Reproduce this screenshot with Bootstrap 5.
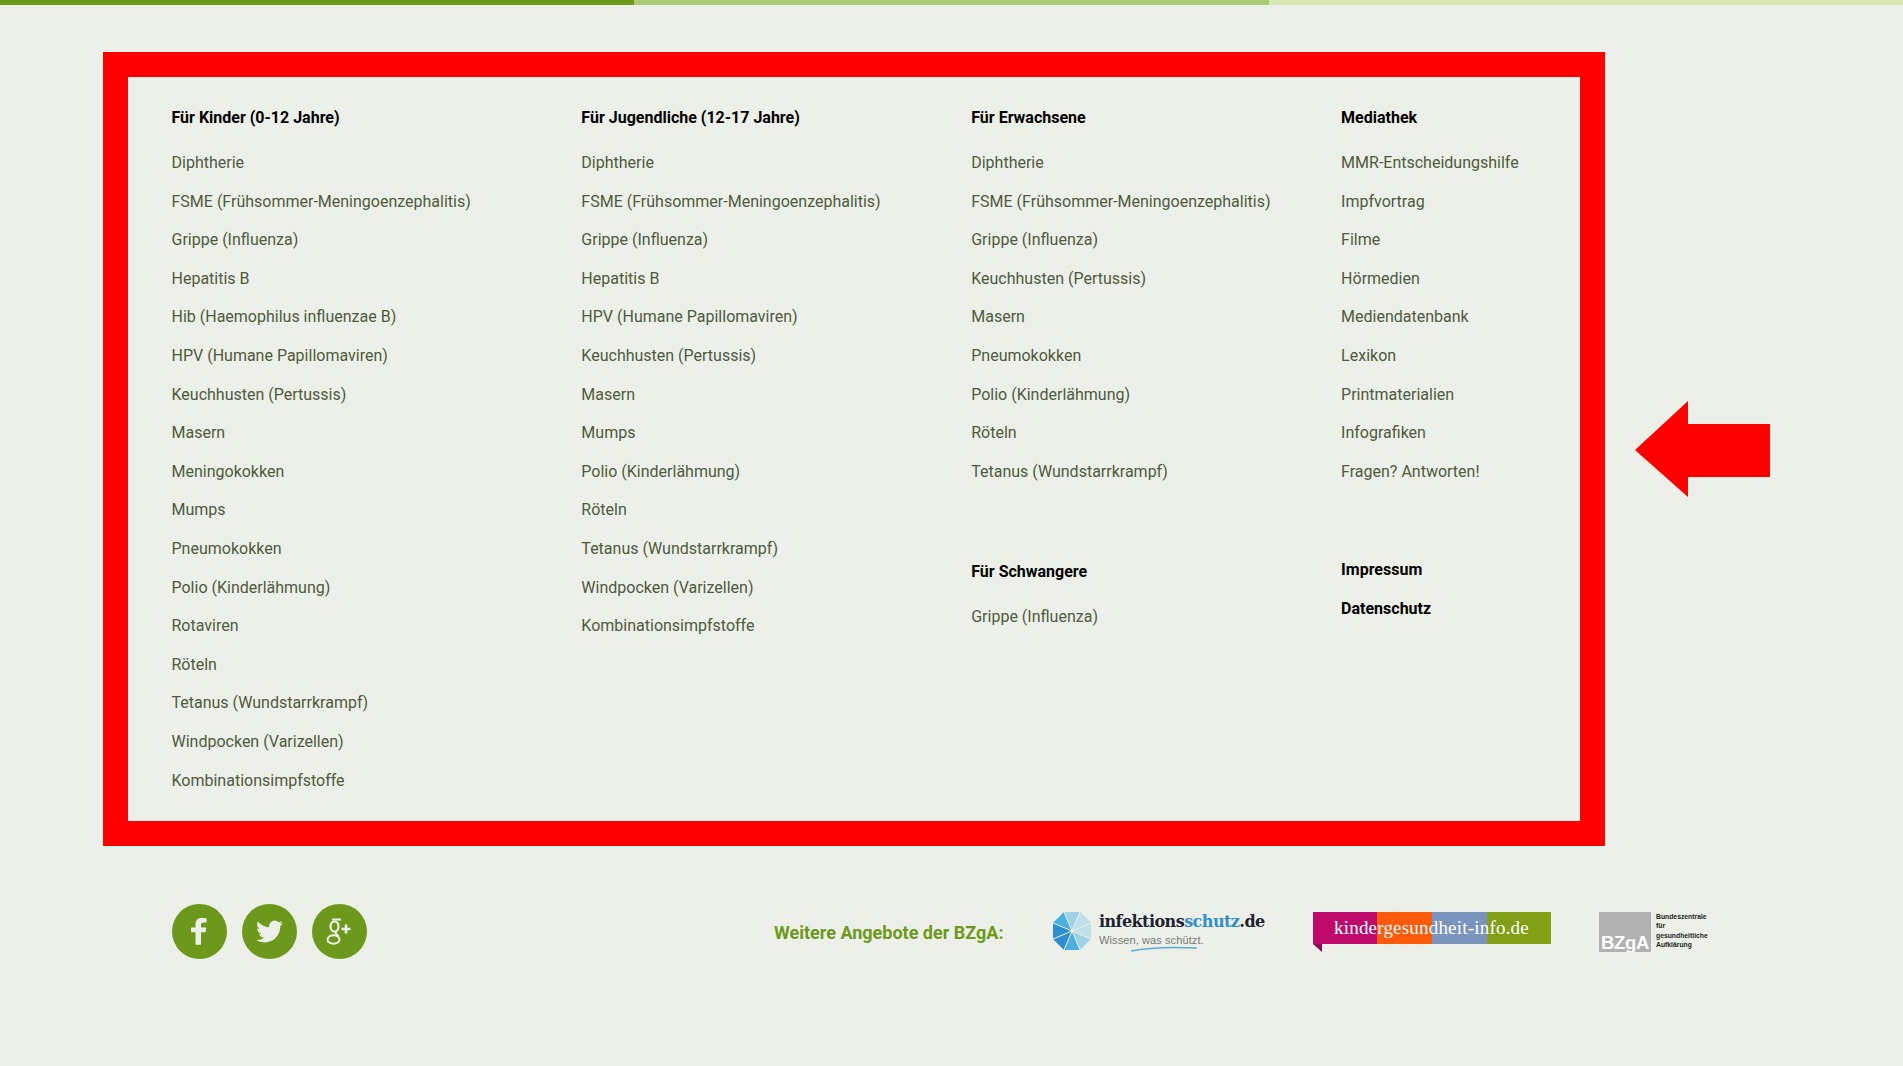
<!DOCTYPE html>
<html lang="de">
<head>
<meta charset="utf-8">
<title>Impfen</title>
<link href="https://cdn.jsdelivr.net/npm/bootstrap@5.3.0/dist/css/bootstrap.min.css" rel="stylesheet">
<style>
body{background:#edf0e8;font-family:Roboto,"Liberation Sans",sans-serif;font-size:16px;color:#4e5a40;height:1066px;overflow:hidden}
.topbar{height:5px}
.seg1{background:#6c991c}.seg2{background:#abcc75}.seg3{background:#d8e8b5}
.stage{padding:47px 0 0 103px;gap:30px}
.redbox{width:1502px;height:794px;border:25px solid #f00;padding:22px 0 0 43.5px}
.c1{width:410px}.c2{width:390px}.c3{width:370px}.c4{width:239px}
.headline{font-weight:700;color:#000;line-height:38.5px;margin:0 0 6.5px;font-size:16px}
.linklist{list-style:none;padding:0;margin:0}
.linklist li{line-height:38.6px;height:38.6px}
.linklist a{color:#4e5a40;text-decoration:none}
.gapblock{margin-top:61.5px}
.gapblock-low{margin-top:59.7px}
.plainhead{margin:0;line-height:38.8px;font-weight:700;font-size:16px}
.plainhead a{color:#000;text-decoration:none}
.arrowpic{width:135px;height:96px;margin-top:349px}
.foot{padding:58px 0 0 171.5px}
.social{gap:15px;width:602.5px}
.rund{width:55px;height:55px;border-radius:50%;background:#6c991c}
.more{font-weight:700;font-size:18px;color:#6c991c;width:279px;line-height:57px}
.ifs{width:260px;height:55px;gap:8px;padding-top:6px}
.ifs-mark{width:38px;height:38px;flex:none;margin-top:2px}
.ifs-name{font-family:"DejaVu Serif","Liberation Serif",serif;font-weight:700;font-size:16px;line-height:20px;color:#1a2233;letter-spacing:-.55px;white-space:nowrap;margin-top:2px}
.ifs-name span{color:#2f8ed0}
.ifs-claim{font-family:"Liberation Sans",sans-serif;font-size:11px;line-height:14px;color:#777;letter-spacing:.1px;margin-top:1px;white-space:nowrap}
.swoosh{display:block;width:66px;height:6px;margin-left:32px;margin-top:-1px}
.kgi{width:238px;height:40px;margin-top:8px;margin-right:48px}
.kgi-band{height:32px;position:relative}
.kgi-band i{display:block;height:100%}
.k1{width:64px;background:#bf0a6b}.k2{width:55px;background:#ff5a0a}.k3{width:55px;background:#7a94bd}.k4{width:64px;background:#82a016}
.kgi-text{position:absolute;left:21px;top:0;line-height:31px;color:#fff;font-family:"Liberation Serif",serif;font-size:19px;letter-spacing:.2px;white-space:nowrap}
.kgi-fold{width:0;height:0;border-top:8px solid #8e0a52;border-left:9px solid transparent}
.bz{margin-top:8px;gap:5px}
.bz-square{width:52px;height:40px;background:#b1b1b1;color:#fff;font-family:"Liberation Sans",sans-serif;font-weight:700;font-size:18.5px;line-height:19px;padding:21px 0 0 2px;letter-spacing:-.3px;overflow:hidden}
.bz-text{font-family:"Liberation Sans",sans-serif;font-size:6.8px;font-weight:700;line-height:9.3px;color:#222;white-space:nowrap}
</style>
</head>
<body>
<div class="topbar d-flex">
  <div class="seg1 flex-fill"></div><div class="seg2 flex-fill"></div><div class="seg3 flex-fill"></div>
</div>
<div class="stage d-flex">
  <div class="redbox d-flex">
    <div class="c1">
      <p class="headline">Für Kinder (0-12 Jahre)</p>
      <ul class="linklist">
        <li><a href="#">Diphtherie</a></li>
        <li><a href="#">FSME (Frühsommer-Meningoenzephalitis)</a></li>
        <li><a href="#">Grippe (Influenza)</a></li>
        <li><a href="#">Hepatitis B</a></li>
        <li><a href="#">Hib (Haemophilus influenzae B)</a></li>
        <li><a href="#">HPV (Humane Papillomaviren)</a></li>
        <li><a href="#">Keuchhusten (Pertussis)</a></li>
        <li><a href="#">Masern</a></li>
        <li><a href="#">Meningokokken</a></li>
        <li><a href="#">Mumps</a></li>
        <li><a href="#">Pneumokokken</a></li>
        <li><a href="#">Polio (Kinderlähmung)</a></li>
        <li><a href="#">Rotaviren</a></li>
        <li><a href="#">Röteln</a></li>
        <li><a href="#">Tetanus (Wundstarrkrampf)</a></li>
        <li><a href="#">Windpocken (Varizellen)</a></li>
        <li><a href="#">Kombinationsimpfstoffe</a></li>
      </ul>
    </div>
    <div class="c2">
      <p class="headline">Für Jugendliche (12-17 Jahre)</p>
      <ul class="linklist">
        <li><a href="#">Diphtherie</a></li>
        <li><a href="#">FSME (Frühsommer-Meningoenzephalitis)</a></li>
        <li><a href="#">Grippe (Influenza)</a></li>
        <li><a href="#">Hepatitis B</a></li>
        <li><a href="#">HPV (Humane Papillomaviren)</a></li>
        <li><a href="#">Keuchhusten (Pertussis)</a></li>
        <li><a href="#">Masern</a></li>
        <li><a href="#">Mumps</a></li>
        <li><a href="#">Polio (Kinderlähmung)</a></li>
        <li><a href="#">Röteln</a></li>
        <li><a href="#">Tetanus (Wundstarrkrampf)</a></li>
        <li><a href="#">Windpocken (Varizellen)</a></li>
        <li><a href="#">Kombinationsimpfstoffe</a></li>
      </ul>
    </div>
    <div class="c3">
      <p class="headline">Für Erwachsene</p>
      <ul class="linklist">
        <li><a href="#">Diphtherie</a></li>
        <li><a href="#">FSME (Frühsommer-Meningoenzephalitis)</a></li>
        <li><a href="#">Grippe (Influenza)</a></li>
        <li><a href="#">Keuchhusten (Pertussis)</a></li>
        <li><a href="#">Masern</a></li>
        <li><a href="#">Pneumokokken</a></li>
        <li><a href="#">Polio (Kinderlähmung)</a></li>
        <li><a href="#">Röteln</a></li>
        <li><a href="#">Tetanus (Wundstarrkrampf)</a></li>
      </ul>
      <div class="gapblock">
        <p class="headline">Für Schwangere</p>
        <ul class="linklist">
          <li><a href="#">Grippe (Influenza)</a></li>
        </ul>
      </div>
    </div>
    <div class="c4">
      <p class="headline">Mediathek</p>
      <ul class="linklist">
        <li><a href="#">MMR-Entscheidungshilfe</a></li>
        <li><a href="#">Impfvortrag</a></li>
        <li><a href="#">Filme</a></li>
        <li><a href="#">Hörmedien</a></li>
        <li><a href="#">Mediendatenbank</a></li>
        <li><a href="#">Lexikon</a></li>
        <li><a href="#">Printmaterialien</a></li>
        <li><a href="#">Infografiken</a></li>
        <li><a href="#">Fragen? Antworten!</a></li>
      </ul>
      <div class="gapblock-low">
        <p class="plainhead"><a href="#">Impressum</a></p>
        <p class="plainhead"><a href="#">Datenschutz</a></p>
      </div>
    </div>
  </div>
  <svg class="arrowpic" viewBox="0 0 135 96"><polygon fill="#f00" points="0,49 53,0 53,23 135,23 135,76 53,76 53,96"/></svg>
</div>
<div class="foot d-flex">
  <div class="social d-flex">
    <a class="rund d-flex align-items-center justify-content-center" href="#" aria-label="Facebook">
      <svg width="34" height="34" viewBox="0 0 34 34"><path fill="#edf0e8" d="M14.5 31V18H10v-5h4.5V9.500C14.500 5 17 3 21 3c1.800 0 3.500.1 4.500.3v4.500h-2.800c-2.200 0-2.700 1-2.700 2.500V13h5.300l-.7 5h-4.600v13z" transform="translate(-1 0) scale(1 .96)"/></svg>
    </a>
    <a class="rund d-flex align-items-center justify-content-center" href="#" aria-label="Twitter">
      <svg width="27" height="27" viewBox="0 0 24 24"><path fill="#edf0e8" d="M23.953 4.57a10 10 0 01-2.825.775 4.958 4.958 0 002.163-2.723c-.951.555-2.005.959-3.127 1.184a4.92 4.92 0 00-8.384 4.482C7.69 8.095 4.067 6.13 1.64 3.162a4.822 4.822 0 00-.666 2.475c0 1.71.87 3.213 2.188 4.096a4.904 4.904 0 01-2.228-.616v.06a4.923 4.923 0 003.946 4.827 4.996 4.996 0 01-2.212.085 4.936 4.936 0 004.604 3.417 9.867 9.867 0 01-6.102 2.105c-.39 0-.779-.023-1.17-.067a13.995 13.995 0 007.557 2.209c9.053 0 13.998-7.496 13.998-13.985 0-.21 0-.42-.015-.63A9.935 9.935 0 0024 4.59z"/></svg>
    </a>
    <a class="rund d-flex align-items-center justify-content-center" href="#" aria-label="Google Plus">
      <svg width="28" height="28" viewBox="0 0 28 28" fill="none" stroke="#edf0e8"><ellipse cx="9.500" cy="8.500" rx="4" ry="5.200" stroke-width="2.200"/><path d="M7 1.600h9M12 13c-3 2-1 3 1.500 5" stroke-width="2"/><ellipse cx="8.500" cy="21.500" rx="6" ry="4.300" stroke-width="2"/><path d="M16.500 11h9M21 6.500v9" stroke-width="2.600"/></svg>
    </a>
  </div>
  <div class="more">Weitere Angebote der BZgA:</div>
  <div class="ifs d-flex">
    <svg class="ifs-mark" viewBox="0 0 38 38">
      <polygon points="11,0 27,0 38,11 38,27 27,38 11,38 0,27 0,11" fill="#9fd2e6"/>
      <polygon points="19,19 11,0 0,11" fill="#4bb0df"/><polygon points="19,19 0,11 0,27" fill="#2e8fd0"/><polygon points="19,19 0,27 11,38" fill="#2e8fd0"/><polygon points="19,19 11,38 27,38" fill="#4bb0df"/>
      <polygon points="19,19 38,11 38,27" fill="#bfe0ea"/><polygon points="19,19 27,0 38,11" fill="#bfe0ea"/>
      <path d="M19 19 11 0M19 19 27 0M19 19 38 11M19 19 38 27M19 19 27 38M19 19 11 38M19 19 0 27M19 19 0 11" stroke="#edf0e8" stroke-width="1"/>
    </svg>
    <div>
      <div class="ifs-name">infektions<span>schutz</span>.de</div>
      <div class="ifs-claim">Wissen, was schützt.</div>
      <svg class="swoosh" viewBox="0 0 66 6" preserveAspectRatio="none"><path d="M0 5C20 1 45 1 66 2" stroke="#5aa9d8" stroke-width="1.400" fill="none"/></svg>
    </div>
  </div>
  <div class="kgi">
    <div class="kgi-band d-flex">
      <i class="k1"></i><i class="k2"></i><i class="k3"></i><i class="k4"></i>
      <span class="kgi-text">kindergesundheit-info.de</span>
    </div>
    <div class="kgi-fold"></div>
  </div>
  <div class="bz d-flex">
    <div class="bz-square">BZgA</div>
    <div class="bz-text">Bundeszentrale<br>für<br>gesundheitliche<br>Aufklärung</div>
  </div>
</div>
</body>
</html>
